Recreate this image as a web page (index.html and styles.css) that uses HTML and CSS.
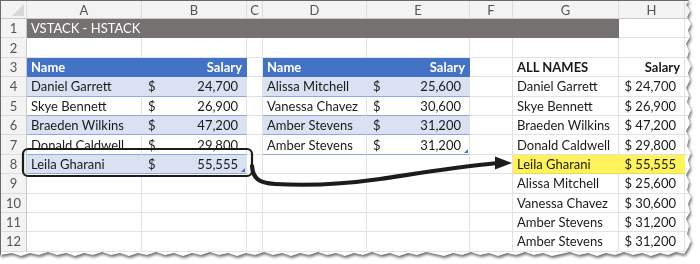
FILE: index.html
```html
<!DOCTYPE html>
<html>
<head>
<meta charset="utf-8">
<link rel="stylesheet" href="styles.css">
</head>
<body>
<div class="shadow">
  <div class="paper">
    <div class="sheet">
      <!-- column headers -->
      <div class="c ch corner"><span class="tri"></span></div>
      <div class="c ch">A</div><div class="c ch">B</div><div class="c ch">C</div><div class="c ch">D</div>
      <div class="c ch">E</div><div class="c ch">F</div><div class="c ch">G</div><div class="c ch">H</div><div class="c ch"></div>
      <!-- row 1 -->
      <div class="c rh">1</div>
      <div class="c band-title">VSTACK - HSTACK</div>
      <div class="c"></div><div class="c"></div>
      <!-- row 2 -->
      <div class="c rh">2</div>
      <div class="c"></div><div class="c"></div><div class="c"></div><div class="c"></div><div class="c"></div><div class="c"></div><div class="c"></div><div class="c"></div><div class="c"></div>
      <!-- row 3 -->
      <div class="c rh">3</div>
      <div class="c th name">Name</div><div class="c th sal">Salary</div>
      <div class="c"></div>
      <div class="c th name">Name</div><div class="c th sal">Salary</div>
      <div class="c"></div>
      <div class="c bold name">ALL NAMES</div><div class="c bold sal2">Salary</div>
      <div class="c"></div>
      <!-- row 4 -->
      <div class="c rh">4</div>
      <div class="c td bandA name">Daniel Garrett</div><div class="c td bandA acc last"><span>$</span><span>24,700</span></div>
      <div class="c"></div>
      <div class="c td bandA name">Alissa Mitchell</div><div class="c td bandA acc last"><span>$</span><span>25,600</span></div>
      <div class="c"></div>
      <div class="c name">Daniel Garrett</div><div class="c cur">$ 24,700</div>
      <div class="c"></div>
      <!-- row 5 -->
      <div class="c rh">5</div>
      <div class="c td name">Skye Bennett</div><div class="c td acc last"><span>$</span><span>26,900</span></div>
      <div class="c"></div>
      <div class="c td name">Vanessa Chavez</div><div class="c td acc last"><span>$</span><span>30,600</span></div>
      <div class="c"></div>
      <div class="c name">Skye Bennett</div><div class="c cur">$ 26,900</div>
      <div class="c"></div>
      <!-- row 6 -->
      <div class="c rh">6</div>
      <div class="c td bandA name">Braeden Wilkins</div><div class="c td bandA acc last"><span>$</span><span>47,200</span></div>
      <div class="c"></div>
      <div class="c td bandA name">Amber Stevens</div><div class="c td bandA acc last"><span>$</span><span>31,200</span></div>
      <div class="c"></div>
      <div class="c name">Braeden Wilkins</div><div class="c cur">$ 47,200</div>
      <div class="c"></div>
      <!-- row 7 -->
      <div class="c rh">7</div>
      <div class="c td name">Donald Caldwell</div><div class="c td acc last"><span>$</span><span>29,800</span></div>
      <div class="c"></div>
      <div class="c td name">Amber Stevens</div><div class="c td acc last handle"><span>$</span><span>31,200</span></div>
      <div class="c"></div>
      <div class="c name">Donald Caldwell</div><div class="c cur">$ 29,800</div>
      <div class="c"></div>
      <!-- row 8 -->
      <div class="c rh">8</div>
      <div class="c td bandA name">Leila Gharani</div><div class="c td bandA acc last handle"><span>$</span><span>55,555</span></div>
      <div class="c"></div><div class="c"></div><div class="c"></div><div class="c"></div>
      <div class="c hl name">Leila Gharani</div><div class="c hl cur">$ 55,555</div>
      <div class="c"></div>
      <!-- row 9 -->
      <div class="c rh">9</div>
      <div class="c"></div><div class="c"></div><div class="c"></div><div class="c"></div><div class="c"></div><div class="c"></div>
      <div class="c name">Alissa Mitchell</div><div class="c cur">$ 25,600</div>
      <div class="c"></div>
      <!-- row 10 -->
      <div class="c rh">10</div>
      <div class="c"></div><div class="c"></div><div class="c"></div><div class="c"></div><div class="c"></div><div class="c"></div>
      <div class="c name">Vanessa Chavez</div><div class="c cur">$ 30,600</div>
      <div class="c"></div>
      <!-- row 11 -->
      <div class="c rh">11</div>
      <div class="c"></div><div class="c"></div><div class="c"></div><div class="c"></div><div class="c"></div><div class="c"></div>
      <div class="c name">Amber Stevens</div><div class="c cur">$ 31,200</div>
      <div class="c"></div>
      <!-- row 12 -->
      <div class="c rh">12</div>
      <div class="c"></div><div class="c"></div><div class="c"></div><div class="c"></div><div class="c"></div><div class="c"></div>
      <div class="c name">Amber Stevens</div><div class="c cur">$ 31,200</div>
      <div class="c"></div>
    </div>
    <svg class="overlay" width="700" height="264" viewBox="0 0 700 264">
      <rect x="23" y="149" width="229" height="27" rx="5" ry="5" fill="none" stroke="#1c1c1c" stroke-width="2.2"/>
      <path d="M252 166 C253 178 258 183 275 184 C310 186 345 184 380 179 C420 173 455 167 498 163" fill="none" stroke="#1c1c1c" stroke-width="4.2" stroke-linecap="round"/>
      <path d="M495 156.5 L512 163 L495 169.5 Z" fill="#1c1c1c"/>
    </svg>
  </div>
</div>
</body>
</html>
```
FILE: styles.css
```css
html, body {
  margin: 0;
  padding: 0;
  background: #ffffff;
}
body {
  width: 700px;
  height: 264px;
  overflow: hidden;
  font-family: "Lato", "Liberation Sans", sans-serif;
}
.shadow {
  width: 700px;
  height: 264px;
  filter: drop-shadow(1px 2px 1.5px rgba(0,0,0,0.6));
}
.paper {
  position: relative;
  width: 700px;
  height: 264px;
  background: #ffffff;
  box-sizing: border-box;
  border-top: 1px solid #6a6a6a;
  border-left: 1px solid #6a6a6a;
  clip-path: polygon(0 0, 689px 0, 686px 5px, 690px 11px, 687px 17px, 691px 24px, 688px 30px, 690px 37px, 686px 44px, 689px 51px, 687px 58px, 691px 66px, 688px 73px, 690px 80px, 686px 88px, 689px 95px, 687px 102px, 691px 110px, 688px 117px, 690px 124px, 686px 131px, 689px 138px, 687px 146px, 691px 153px, 688px 160px, 690px 168px, 686px 175px, 689px 182px, 687px 190px, 691px 197px, 688px 204px, 690px 212px, 686px 219px, 689px 226px, 687px 234px, 691px 241px, 688px 248px, 684px 254px, 676px 252px, 668px 255px, 660px 253px, 651px 256px, 642px 253px, 633px 255px, 624px 252px, 615px 255px, 606px 253px, 597px 256px, 588px 253px, 579px 255px, 570px 252px, 561px 254px, 552px 256px, 543px 253px, 534px 255px, 525px 252px, 516px 255px, 507px 253px, 498px 256px, 489px 253px, 480px 255px, 471px 252px, 462px 255px, 453px 253px, 444px 256px, 435px 254px, 426px 252px, 417px 255px, 408px 253px, 399px 256px, 390px 253px, 381px 255px, 372px 252px, 363px 255px, 354px 253px, 345px 256px, 336px 253px, 327px 255px, 318px 252px, 309px 255px, 300px 253px, 291px 256px, 282px 253px, 273px 255px, 264px 252px, 255px 255px, 246px 253px, 237px 256px, 228px 253px, 219px 255px, 210px 252px, 201px 255px, 192px 253px, 183px 256px, 174px 253px, 165px 255px, 156px 252px, 147px 255px, 138px 253px, 129px 256px, 120px 253px, 111px 255px, 102px 252px, 93px 255px, 84px 253px, 75px 256px, 66px 253px, 57px 255px, 48px 252px, 39px 255px, 30px 253px, 21px 256px, 12px 253px, 0 255px);
}
.sheet {
  display: grid;
  grid-template-columns: 26px 115px 105px 16px 104px 103px 43px 106px 66px 30px;
  grid-template-rows: 18px repeat(12, 19.4px);
  font-size: 13px;
  color: #1a1a1a;
}
.c {
  box-sizing: border-box;
  border-right: 1px solid #e2e2e2;
  border-bottom: 1px solid #e2e2e2;
  display: flex;
  align-items: center;
  white-space: nowrap;
  overflow: hidden;
  min-width: 0;
}
.ch {
  background: #f3f3f3;
  color: #555555;
  font-size: 13px;
  justify-content: center;
  border-right: 1px solid #dcdcdc;
  border-bottom: 1px solid #c9c9c9;
}
.corner {
  position: relative;
}
.tri {
  position: absolute;
  right: 2px;
  bottom: 2px;
  width: 0;
  height: 0;
  border-left: 12px solid transparent;
  border-bottom: 12px solid #d8d8d8;
}
.rh {
  background: #f3f3f3;
  color: #555555;
  font-size: 13px;
  justify-content: center;
  border-right: 1px solid #c9c9c9;
  border-bottom: 1px solid #dcdcdc;
}
.band-title {
  grid-column: span 7;
  background: #757171;
  border-color: #757171;
  color: #ffffff;
  padding-left: 4px;
}
.th {
  background: #4472c4;
  border-color: #4472c4;
  color: #ffffff;
  font-weight: 700;
}
.bold {
  font-weight: 700;
}
.name {
  padding-left: 4px;
}
.sal {
  justify-content: flex-end;
  padding-right: 4px;
}
.sal2 {
  justify-content: flex-end;
  padding-right: 4px;
}
.td {
  border-bottom: 1px solid #8ea9db;
}
.bandA {
  background: #d9e1f2;
  border-right-color: #d9e1f2;
}
.last {
  border-right-color: #e2e2e2;
}
.acc {
  justify-content: space-between;
  padding-left: 6px;
  padding-right: 8px;
}
.cur {
  justify-content: flex-end;
  padding-right: 8px;
}
.hl {
  background: #fff25a;
  border-right-color: #fff25a;
  border-bottom-color: #e6da50;
}
.handle {
  position: relative;
}
.handle::after {
  content: "";
  position: absolute;
  right: 1px;
  bottom: 1px;
  width: 0;
  height: 0;
  border-left: 4px solid transparent;
  border-bottom: 4px solid #4472c4;
}
.overlay {
  position: absolute;
  left: -1px;
  top: -1px;
}
```
